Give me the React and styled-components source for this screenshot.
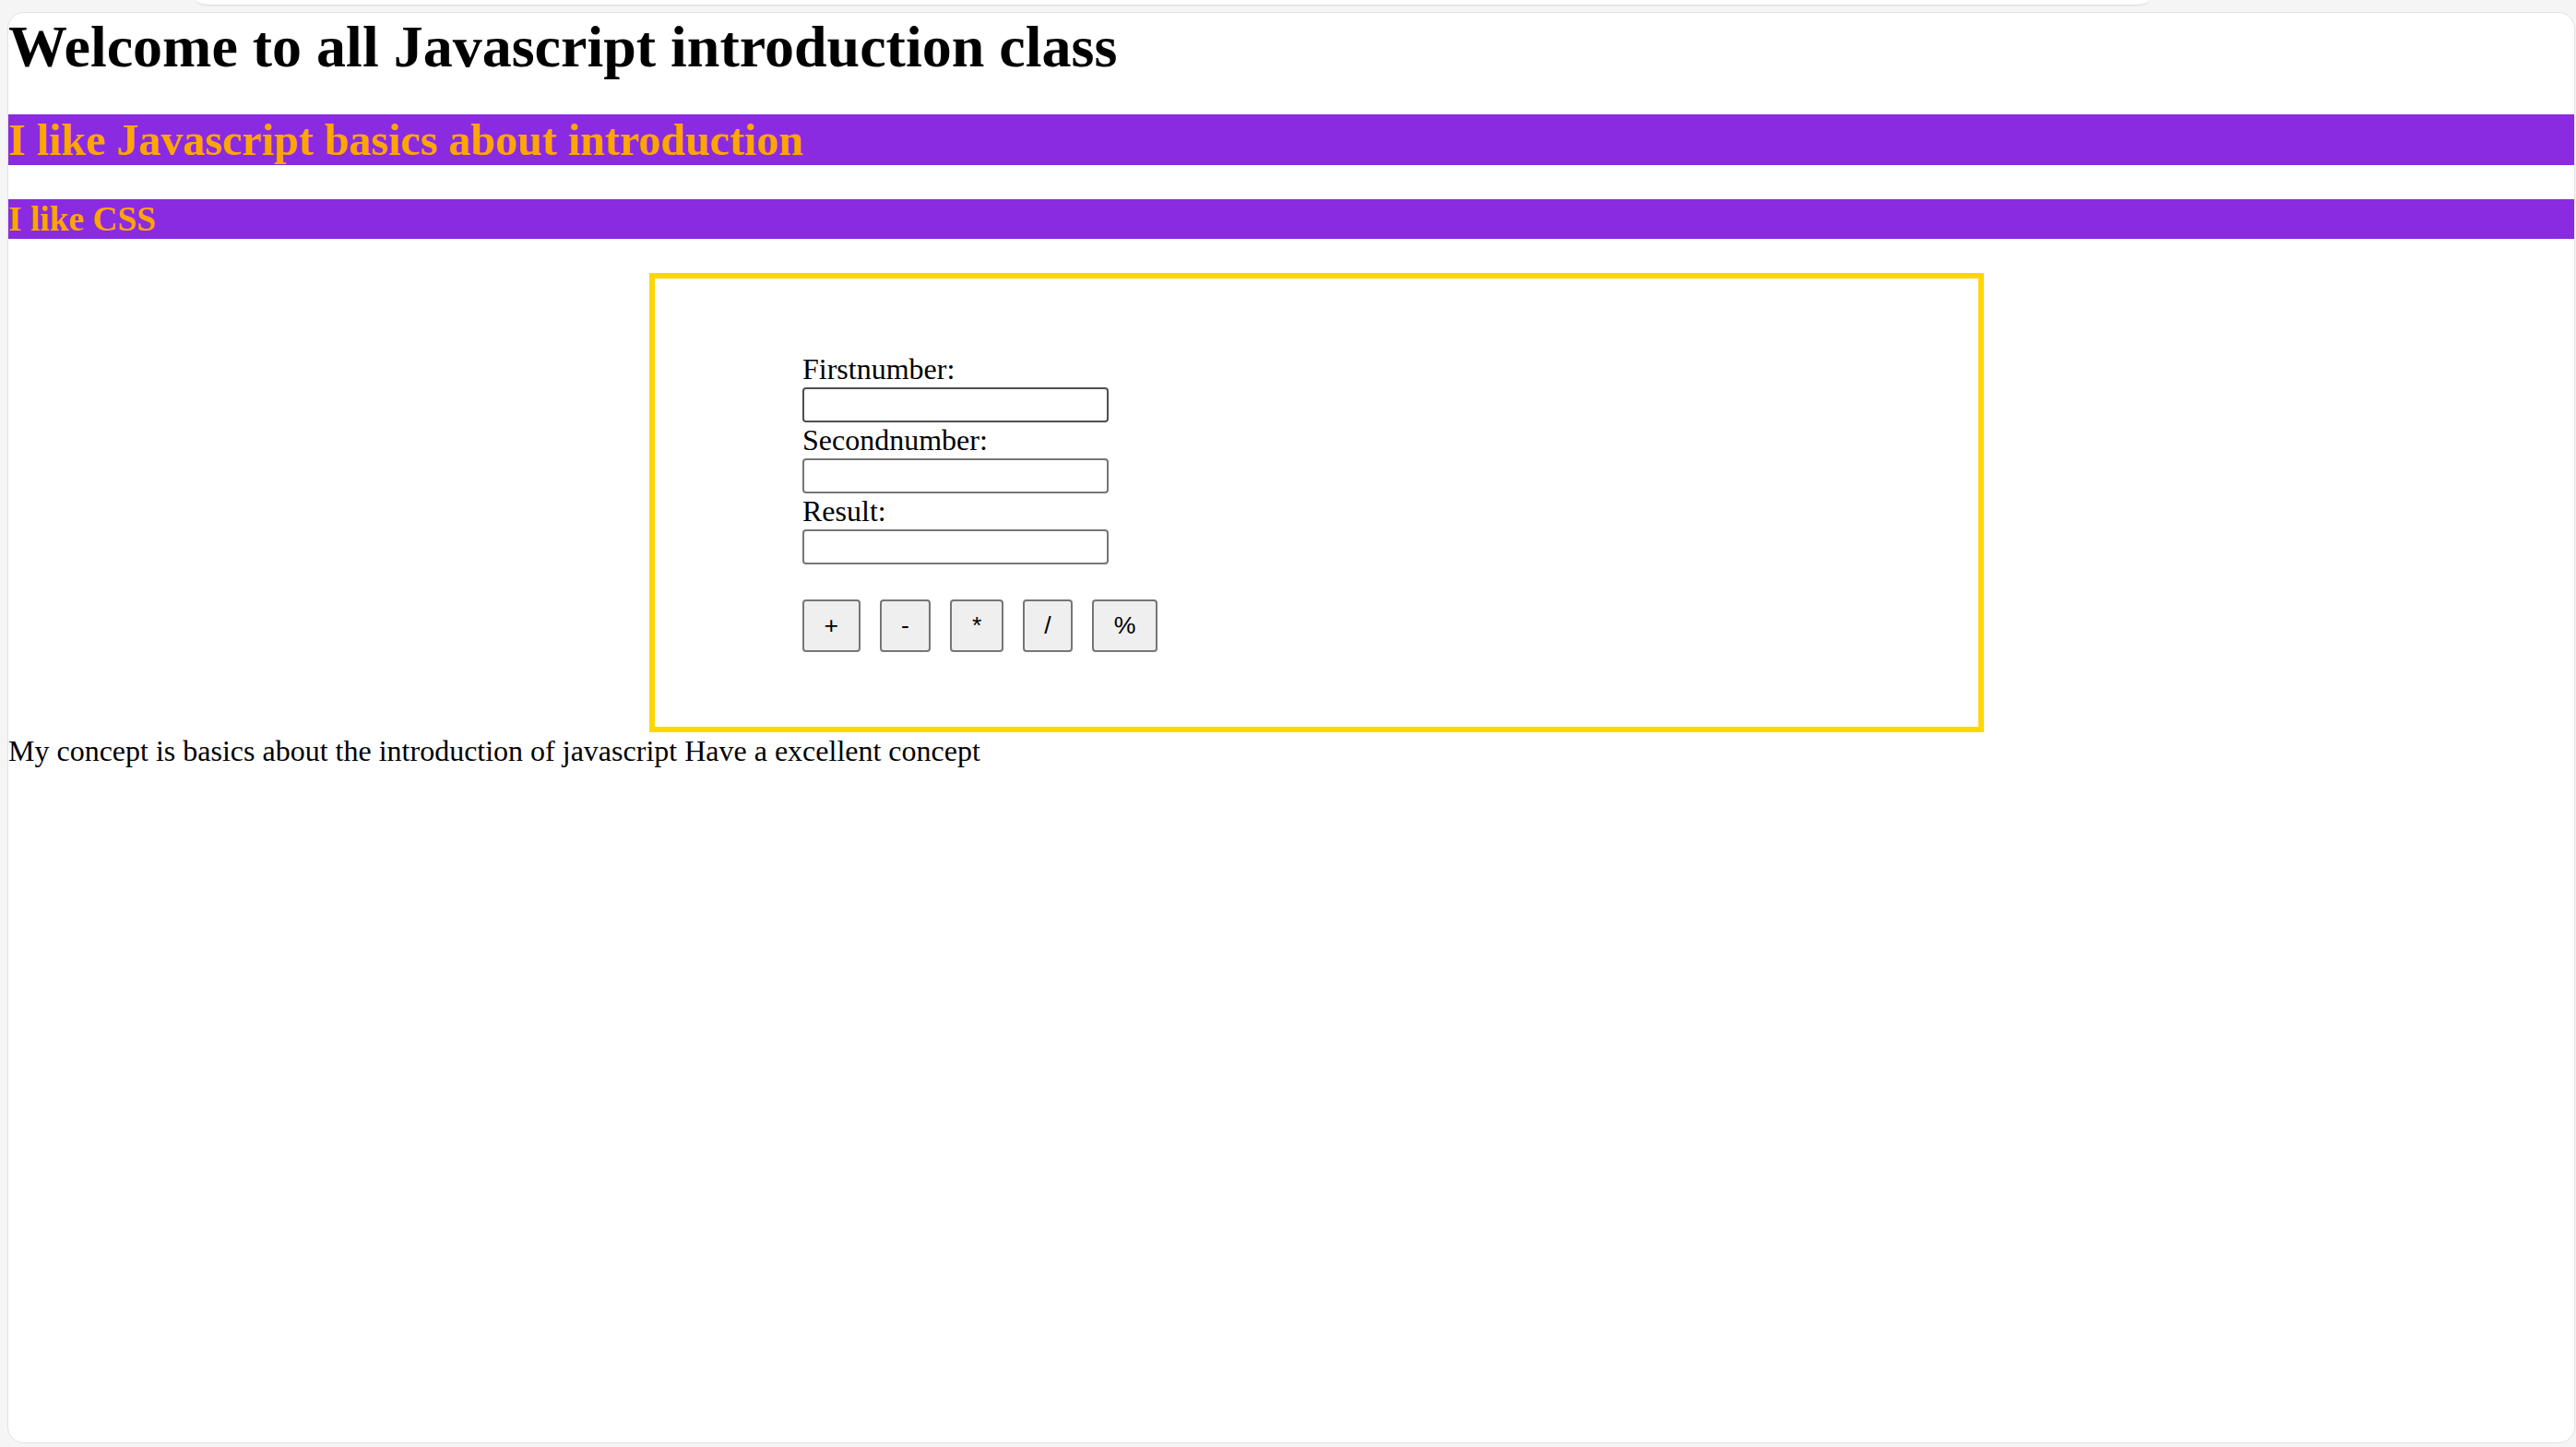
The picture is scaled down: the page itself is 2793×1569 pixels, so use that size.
import React from 'react'
import styled, { createGlobalStyle } from 'styled-components'

const GlobalStyle = createGlobalStyle`
  html, body {
    margin: 0;
    padding: 0;
    background: #f5f5f5;
  }
  body {
    width: 2793px;
    height: 1569px;
    overflow: hidden;
  }
`

const Frame = styled.div`
  display: flex;
  flex-direction: column;
  padding-left: 8px;
  height: 1569px;
  box-sizing: border-box;
`

const TopStrip = styled.div`
  margin-left: 205px;
  width: 2117px;
  height: 5px;
  background: #ffffff;
  border-radius: 0 0 14px 14px / 0 0 5px 5px;
  box-shadow: 0 1px 2px rgba(0, 0, 0, 0.12);
`

const Card = styled.main`
  margin-top: 8px;
  width: 2784px;
  height: 1552px;
  box-sizing: border-box;
  background: #ffffff;
  border: 1px solid #e2e2e2;
  border-radius: 18px;
  overflow: hidden;
  font-family: "Liberation Serif", "Times New Roman", serif;
  color: #000000;
`

const Title = styled.h1`
  margin: 0;
  font-size: 64px;
  font-weight: bold;
  line-height: normal;
`

const Banner = styled.h2`
  margin: ${p => p.$gap}px 0 0;
  padding: 0;
  background: #8a2be2;
  color: #ffa500;
  font-size: ${p => p.$size}px;
  font-weight: bold;
  line-height: normal;
`

const Calculator = styled.section`
  margin: 37px 0 0 695px;
  width: 1447px;
  box-sizing: border-box;
  border: 6px solid #ffd700;
  padding: 79px 0 81px 160px;
  display: flex;
  flex-direction: column;
  align-items: flex-start;
`

const FieldLabel = styled.label`
  display: block;
  font-size: 32px;
  line-height: 39px;
`

const NumberInput = styled.input`
  display: block;
  width: 332px;
  height: 38px;
  box-sizing: border-box;
  margin: 0;
  padding: 2px 4px;
  border: 2px solid ${p => (p.$active ? '#4f4f4f' : '#767676')};
  border-radius: 4px;
  background: #ffffff;
  font-family: "Liberation Sans", Arial, sans-serif;
  font-size: 26px;
  outline: none;
`

const ButtonRow = styled.div`
  display: flex;
  gap: 21px;
  margin-top: 38px;
`

const OpButton = styled.button`
  height: 57px;
  box-sizing: border-box;
  margin: 0;
  padding: 0 21.5px;
  border: 2px solid #767676;
  border-radius: 4px;
  background: #efefef;
  color: #000000;
  font-family: "Liberation Sans", Arial, sans-serif;
  font-size: 26.67px;
  line-height: normal;
  cursor: pointer;
`

const Closing = styled.div`
  margin-top: 2px;
  font-size: 32px;
  line-height: normal;
`

const operators = ['+', '-', '*', '/', '%']

export default function App() {
  return (
    <Frame>
      <GlobalStyle />
      <TopStrip />
      <Card>
        <Title>Welcome to all Javascript introduction class</Title>
        <Banner $gap={36} $size={48}>I like Javascript basics about introduction</Banner>
        <Banner $gap={37} $size={37.44}>I like CSS</Banner>
        <Calculator>
          <FieldLabel htmlFor="first">Firstnumber:</FieldLabel>
          <NumberInput id="first" type="text" $active />
          <FieldLabel htmlFor="second">Secondnumber:</FieldLabel>
          <NumberInput id="second" type="text" />
          <FieldLabel htmlFor="result">Result:</FieldLabel>
          <NumberInput id="result" type="text" />
          <ButtonRow>
            {operators.map(op => <OpButton key={op} type="button">{op}</OpButton>)}
          </ButtonRow>
        </Calculator>
        <Closing>My concept is basics about the introduction of javascript Have a excellent concept</Closing>
      </Card>
    </Frame>
  )
}
